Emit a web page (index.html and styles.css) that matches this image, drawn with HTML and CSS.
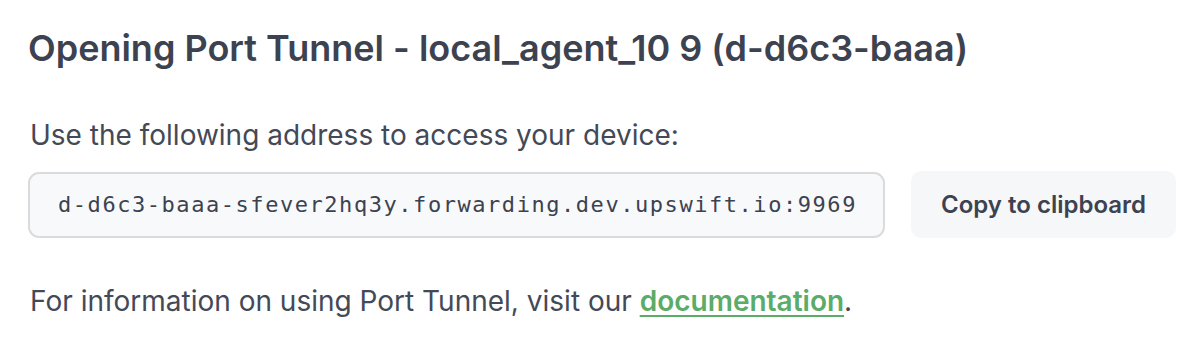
FILE: index.html
```html
<!DOCTYPE html>
<html lang="en">
<head>
    <meta charset="UTF-8">
    <meta name="viewport" content="width=device-width, initial-scale=1.0">
    <title>Opening Port Tunnel</title>
    <link rel="stylesheet" href="styles.css">
</head>
<body>
    <div class="dialog">
        <h2 class="title">Opening Port Tunnel - local_agent_10 9 (d-d6c3-baaa)</h2>
        <p class="lead">Use the following address to access your device:</p>
        <div class="address-row">
            <div class="address">d-d6c3-baaa-sfever2hq3y.forwarding.dev.upswift.io:9969</div>
            <button class="copy">Copy to clipboard</button>
        </div>
        <p class="note">For information on using Port Tunnel, visit our <a href="#">documentation</a>.</p>
    </div>
</body>
</html>
```

FILE: styles.css
```css
* {
    box-sizing: border-box;
}

body {
    margin: 0;
    background: #ffffff;
    font-family: Inter, "Noto Sans", sans-serif;
    color: #444957;
}

.dialog {
    padding: 24px 15px 0 28px;
}

.title {
    margin: 0;
    font-size: 36px;
    font-weight: 600;
    line-height: 48px;
    color: #3d4250;
}

.lead {
    margin: 46px 0 0 2px;
    font-size: 28px;
    line-height: 34px;
}

.address-row {
    display: flex;
    align-items: center;
    gap: 26px;
    margin-top: 19px;
}

.address {
    flex: 0 0 857px;
    height: 66px;
    display: flex;
    align-items: center;
    padding-left: 28px;
    background: #f8f9fb;
    border: 2px solid #dadbdd;
    border-radius: 11px;
    font-family: "DejaVu Sans Mono", monospace;
    font-size: 22px;
    letter-spacing: 1.55px;
    color: #3d4250;
}

.copy {
    flex: 0 0 265px;
    height: 67px;
    border: none;
    border-radius: 10px;
    background: #f6f7f9;
    font-family: Inter, sans-serif;
    font-size: 24px;
    font-weight: 600;
    color: #3d4250;
}

.note {
    margin: 46px 0 0 2px;
    font-size: 28px;
    line-height: 34px;
}

.note a {
    color: #5bab69;
    font-weight: 600;
    text-decoration: underline;
    text-decoration-thickness: 2px;
    text-underline-offset: 4px;
}
```
